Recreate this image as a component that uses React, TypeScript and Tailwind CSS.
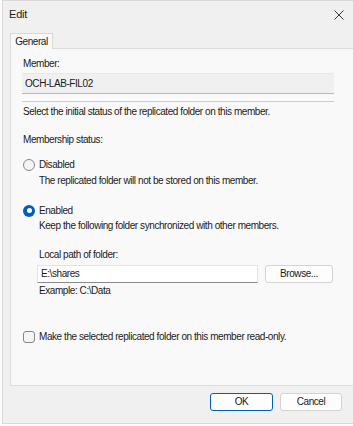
import React, { useState } from 'react';

const Radio: React.FC<{ checked: boolean }> = ({ checked }) =>
  checked ? (
    <span className="w-[12px] h-[12px] rounded-full bg-[#005fb8] flex items-center justify-center shrink-0">
      <span className="w-[5px] h-[5px] rounded-full bg-white" />
    </span>
  ) : (
    <span className="w-[12px] h-[12px] rounded-full border border-[#868686] bg-[#f5f5f5] shrink-0" />
  );

const App: React.FC = () => {
  const [status, setStatus] = useState<'disabled' | 'enabled'>('enabled');
  const [readOnly, setReadOnly] = useState(false);

  return (
    <div
      className="w-[353px] h-[426px] bg-[#fbfbfb] flex overflow-hidden text-[#1b1b1b] text-[10px] leading-[12px] tracking-[-0.43px]"
      style={{ fontFamily: '"Liberation Sans", Arial, sans-serif' }}
    >
      <div className="ml-[2px] w-[360px] shrink-0 h-[424px] bg-[#f0f0f0] border border-[#d9d9d9] flex flex-col">
        {/* Title bar */}
        <div className="h-[31px] flex justify-between pl-[6px] pr-[17px] pt-[7px]">
          <span className="text-[11px] tracking-[-0.2px]">Edit</span>
          <svg width="10" height="10" viewBox="0 0 10 10" className="mt-[2px]">
            <path d="M0.5 0.5 L9.5 9.5 M9.5 0.5 L0.5 9.5" stroke="#3a3a3a" strokeWidth="1" />
          </svg>
        </div>

        {/* Tabs */}
        <div className="pl-[7px] flex">
          <div className="h-[16px] w-[43px] bg-[#f9f9f9] border border-b-0 border-[#d9d9d9] flex items-center justify-center translate-y-[1px]">
            General
          </div>
        </div>

        {/* Panel */}
        <div className="ml-[7px] mr-[6px] h-[338px] bg-[#f9f9f9] border border-[#dcdcdc] pl-[12px] flex flex-col">
          <div className="mt-[9px]">Member:</div>
          <div className="mt-[3px] w-[312px] -ml-[1px] h-[21px] bg-[#f0f0f0] border-t border-[#e8e8e8] border-b border-b-[#b9b9b9] flex items-center px-[3px]">
            OCH-LAB-FIL02
          </div>
          <div className="mt-[7px] w-[312px] -ml-[1px] h-px bg-[#cdcdcd]" />
          <div className="mt-[4px]">Select the initial status of the replicated folder on this member.</div>
          <div className="mt-[16px]">Membership status:</div>

          <button className="mt-[12px] h-[13px] flex items-center gap-[4px] text-left" onClick={() => setStatus('disabled')}>
            <Radio checked={status === 'disabled'} />
            <span>Disabled</span>
          </button>
          <div className="mt-[4px] pl-[16px]">The replicated folder will not be stored on this member.</div>

          <button className="mt-[17px] h-[13px] flex items-center gap-[4px] text-left" onClick={() => setStatus('enabled')}>
            <Radio checked={status === 'enabled'} />
            <span>Enabled</span>
          </button>
          <div className="mt-[3px] pl-[16px]">Keep the following folder synchronized with other members.</div>

          <div className="mt-[17px] pl-[16px]">Local path of folder:</div>
          <div className="mt-[4px] pl-[14px] flex items-center gap-[7px]">
            <div className="w-[221px] h-[18px] bg-white border border-[#e3e3e3] border-b-[#8a8a8a] flex items-center px-[3px]">
              E:\shares
            </div>
            <button className="w-[68px] h-[18px] bg-[#fdfdfd] border border-[#d3d3d3] rounded-[3px] flex items-center justify-center">
              Browse...
            </button>
          </div>
          <div className="mt-[2px] pl-[16px]">Example: C:\Data</div>

          <button className="mt-[33px] h-[13px] flex items-center gap-[4px] text-left" onClick={() => setReadOnly(!readOnly)}>
            <span
              className={`w-[12px] h-[12px] rounded-[3px] border shrink-0 ${
                readOnly ? 'bg-[#005fb8] border-[#005fb8]' : 'bg-[#f5f5f5] border-[#868686]'
              }`}
            />
            <span>Make the selected replicated folder on this member read-only.</span>
          </button>
        </div>

        {/* Footer */}
        <div className="flex gap-[7px] pl-[207px] mt-[7px]">
          <button className="w-[63px] h-[18px] bg-[#fdfdfd] border border-[#005fb8] rounded-[3px] flex items-center justify-center">
            OK
          </button>
          <button className="w-[62px] h-[18px] bg-[#fdfdfd] border border-[#d3d3d3] rounded-[3px] flex items-center justify-center">
            Cancel
          </button>
        </div>
      </div>
    </div>
  );
};

export default App;
